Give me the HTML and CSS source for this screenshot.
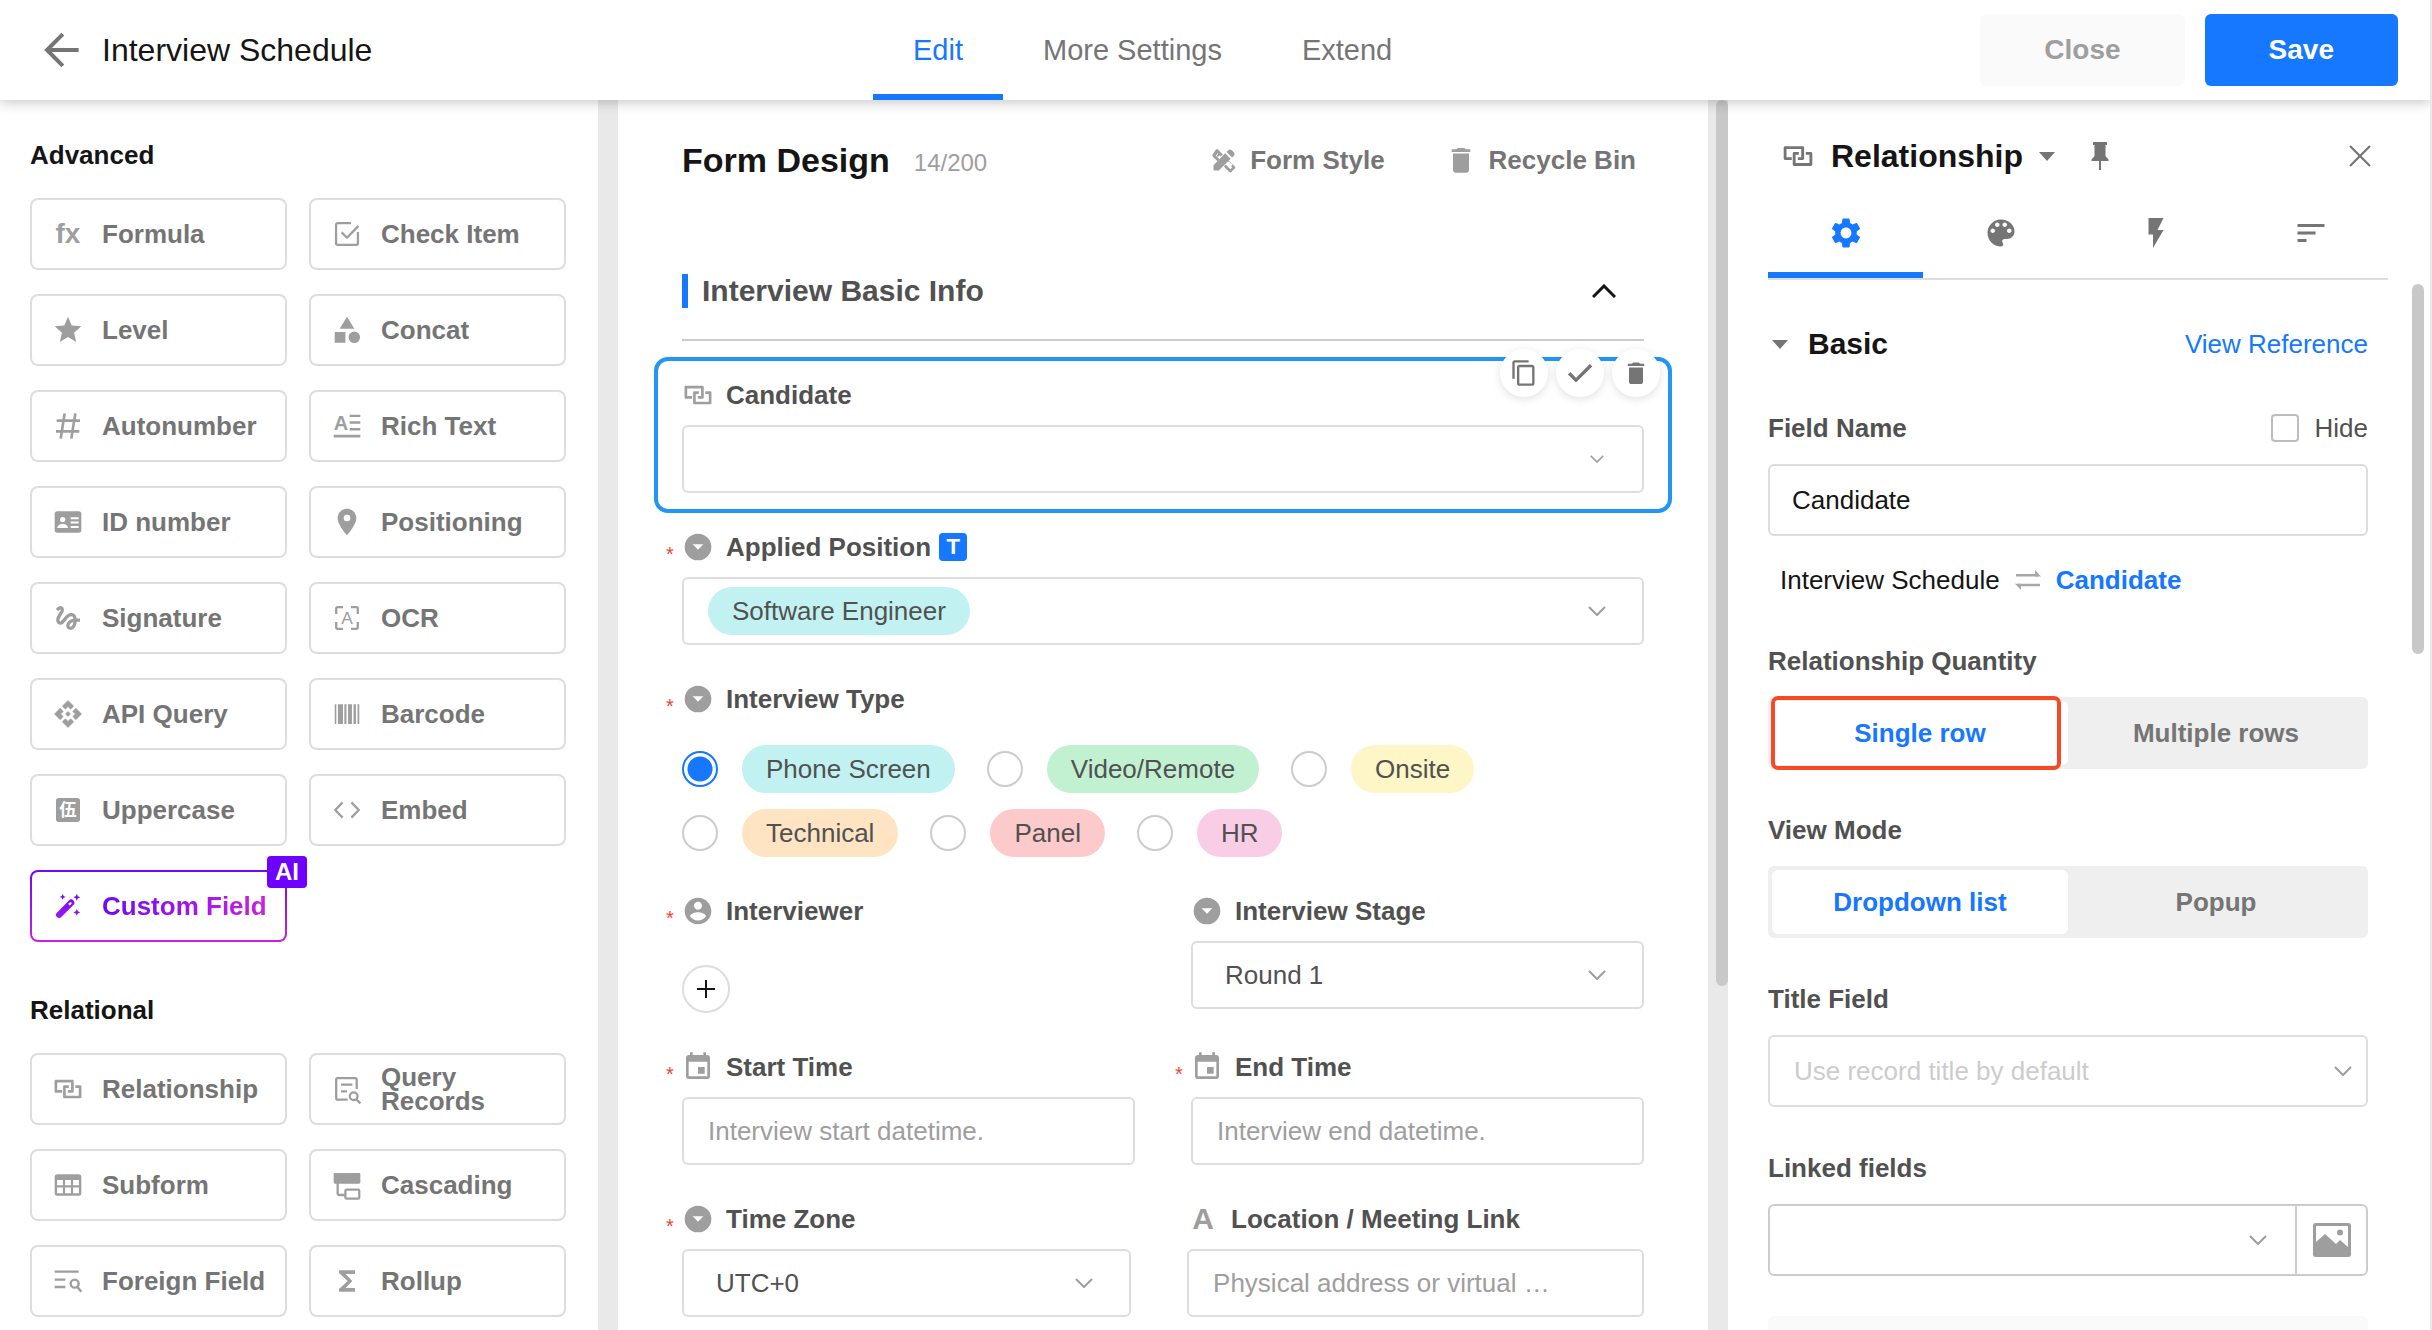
FILE: index.html
```html
<!DOCTYPE html>
<html lang="en">
<head>
  <meta charset="UTF-8">
  <meta name="viewport" content="width=device-width, initial-scale=1.0">
  <title>Interview Schedule</title>
  <link rel="stylesheet" href="styles.css">
</head>
<body>
  <!-- Icon sprite -->
  <svg class="sprite" aria-hidden="true">
    <defs>
      <linearGradient id="ai-gradient" x1="0" y1="0" x2="0" y2="1">
        <stop offset="0" stop-color="#6e09f9"/>
        <stop offset="1" stop-color="#a016f0"/>
      </linearGradient>
    </defs>
    <symbol id="i-relation" viewBox="0 0 24 24"><path fill="none" stroke="currentColor" stroke-width="2" stroke-linejoin="round" d="M7.6 13.8H2.9V6.1h12.4v7.7h-3.4M12.6 10.2H9.3V18h11.8v-7.8h-3.6"/></symbol>
    <symbol id="i-check-item" viewBox="0 0 24 24"><path fill="none" stroke="currentColor" stroke-width="1.7" stroke-linejoin="round" d="M15 3.8H5c-.7 0-1.2.5-1.2 1.2v14c0 .7.5 1.2 1.2 1.2h14c.7 0 1.2-.5 1.2-1.2v-8.500M8 10.800l4 4 8.600-8.900"/></symbol>
    <symbol id="i-star" viewBox="0 0 24 24"><path d="M12 17.270L18.180 21l-1.640-7.030L22 9.240l-7.190-.610L12 2 9.190 8.630 2 9.240l5.460 4.730L5.820 21z"/></symbol>
    <symbol id="i-shapes" viewBox="0 0 24 24"><path d="M12 2 6.500 11h11z"/><path d="M2.800 13.500h8v8h-8z"/><circle cx="17.500" cy="17.500" r="4.300"/></symbol>
    <symbol id="i-hash" viewBox="0 0 24 24"><path fill="none" stroke="currentColor" stroke-width="2" d="M9.500 2.500l-3 19M17.500 2.500l-3 19M3.500 8h17.500M3 16h17.500"/></symbol>
    <symbol id="i-id" viewBox="0 0 24 24"><path fill-rule="evenodd" d="M4 4h16a2 2 0 0 1 2 2v12a2 2 0 0 1-2 2H4a2 2 0 0 1-2-2V6a2 2 0 0 1 2-2zM8 8.200a2 2 0 1 0 0 4 2 2 0 0 0 0-4zM4 16.500h8c0-2-2-3-4-3s-4 1-4 3zM14 8.500v1.500h6V8.500zM14 11.700v1.500h6v-1.500zM14 15v1.500h6V15z"/></symbol>
    <symbol id="i-place" viewBox="0 0 24 24"><path fill-rule="evenodd" d="M12 2C8.130 2 5 5.130 5 9c0 5.250 7 13 7 13s7-7.750 7-13c0-3.870-3.130-7-7-7zm0 9.500a2.500 2.500 0 1 1 0-5 2.500 2.500 0 0 1 0 5z"/></symbol>
    <symbol id="i-gesture" viewBox="0 0 24 24"><path d="M4.590 6.890c.7-.71 1.400-1.350 1.710-1.220.5.2 0 1.030-.3 1.520-.25.42-2.860 3.890-2.860 6.310 0 1.280.48 2.340 1.340 2.980.75.56 1.740.73 2.640.46 1.070-.31 1.950-1.400 3.060-2.770 1.210-1.490 2.830-3.440 4.080-3.440 1.630 0 1.650 1.010 1.760 1.790-3.780.64-5.380 3.670-5.380 5.370 0 1.700 1.440 3.090 3.210 3.090 1.630 0 4.290-1.330 4.690-6.100H21v-2.500h-2.470c-.15-1.650-1.090-4.200-4.030-4.200-2.250 0-4.180 1.910-4.940 2.840-.58.73-2.060 2.480-2.290 2.720-.25.3-.68.84-1.110.84-.45 0-.72-.83-.36-1.920.35-1.090 1.400-2.860 1.850-3.520.78-1.140 1.300-1.920 1.300-3.280C8.950 3.690 7.310 3 6.440 3 5.120 3 3.970 4 3.720 4.250c-.36.36-.66.66-.88.93l1.750 1.710zm9.290 11.660c-.31 0-.74-.26-.74-.72 0-.6.73-2.200 2.870-2.760-.3 2.690-1.430 3.480-2.130 3.480z"/></symbol>
    <symbol id="i-api" viewBox="-1 -1 26 26"><path stroke="currentColor" stroke-width=".5" stroke-linejoin="round" d="M14 12l-2 2-2-2 2-2 2 2zm-2-6l2.120 2.120 2.500-2.500L12 1 7.380 5.620l2.500 2.500L12 6zm-6 6l2.120-2.120-2.500-2.500L1 12l4.620 4.620 2.500-2.500L6 12zm12 0l-2.120 2.120 2.500 2.500L23 12l-4.620-4.620-2.500 2.500L18 12zm-6 6l-2.120-2.120-2.500 2.500L12 23l4.620-4.620-2.500-2.500L12 18z"/></symbol>
    <symbol id="i-barcode" viewBox="0 0 24 24"><path d="M2.800 4.700h1.200v14.800H2.800zM5.200 4.700H9v14.800H5.200zM10 4.700h1.600v14.800H10zM12.800 4.700h2.900v14.800h-2.900zM16.900 4.700h1.800v14.800h-1.800zM19.900 4.700h1.300v14.800h-1.300z"/></symbol>
    <symbol id="i-code" viewBox="0 0 24 24"><path fill="none" stroke="currentColor" stroke-width="1.700" d="M8.700 6.300 3.200 12l5.500 5.700M15.300 6.300l5.500 5.700-5.500 5.700"/></symbol>
    <symbol id="i-wand" viewBox="0 0 24 24"><path fill="url(#ai-gradient)" fill-rule="evenodd" d="M12.700 7.800 3.700 17a2.300 2.300 0 0 0 3.300 3.300l9-9a2.300 2.300 0 0 0-3.300-3.500zM13 9.600l1.400-.6.300 1.300-1.400 1.400-1.200-1.200zM8 3l.7 1.500 1.500.7-1.500.7L8 7.400l-.7-1.500-1.500-.7 1.500-.7zM18.600 2.800l.8 1.800 1.800.8-1.800.8-.8 1.800-.8-1.800-1.800-.8 1.800-.8zM18.600 14.200l.8 1.800 1.800.8-1.800.8-.8 1.800-.8-1.800-1.800-.8 1.800-.8z"/></symbol>
    <symbol id="i-query" viewBox="0 0 24 24"><g fill="none" stroke="currentColor" stroke-width="1.700"><path d="M12.500 20H5c-.6 0-1.100-.5-1.100-1.100V4.900c0-.6.5-1.100 1.100-1.100h13.200c.6 0 1.100.5 1.100 1.100V12"/><path d="M7.500 8.800h8.500M7.500 13.700h4.500"/><circle cx="17" cy="17.500" r="2.900"/><path d="m19 19.800 3 3"/></g></symbol>
    <symbol id="i-table" viewBox="0 0 24 24"><path fill-rule="evenodd" d="M4 4h16a2 2 0 0 1 2 2v12a2 2 0 0 1-2 2H4a2 2 0 0 1-2-2V6a2 2 0 0 1 2-2zM3.800 8.200v4h4.400v-4zM9.800 8.200v4h4.400v-4zM15.800 8.200v4h4.400v-4zM3.800 13.800v4.400h4.400v-4.400zM9.800 13.800v4.400h4.400v-4.400zM15.800 13.800v4.400h4.400v-4.400z"/></symbol>
    <symbol id="i-cascade" viewBox="0 0 24 24"><rect x="2" y="3" width="20" height="8" rx="1"/><path fill="none" stroke="currentColor" stroke-width="1.700" d="M5 10v8.500c0 .5.400 1 1 1h5M11.700 15.500h8.600c.5 0 .9.400.9.900v4.900c0 .5-.4.900-.9.900h-8.600c-.5 0-.9-.4-.9-.9v-4.900c0-.5.4-.9.900-.9z"/></symbol>
    <symbol id="i-foreign" viewBox="0 0 24 24"><path fill="none" stroke="currentColor" stroke-width="1.800" d="M2 5h18M2 11h8M2 16.500h8"/><g fill="none" stroke="currentColor" stroke-width="1.800"><circle cx="17" cy="14" r="3"/><path d="m19 16.500 3 3.500"/></g></symbol>
    <symbol id="i-sum" viewBox="0 0 24 24"><path d="M18 4H6v2l6.500 6L6 18v2h12v-2.700H11l5-5.300-5-5.300h7z"/></symbol>
    <symbol id="i-back" viewBox="0 0 24 24"><path fill="none" stroke="currentColor" stroke-width="2.400" d="M22 12H3.500M12.500 2.500 3 12l9.500 9.500" /></symbol>
    <symbol id="i-tools" viewBox="0 0 24 24"><path fill-rule="evenodd" d="M6.800 3 11 7.200 9.300 8.900l-1-1-1.500 1.500-1.200-1.200 1.500-1.500-.4-.4-1.800 1.800 3.200 3.200-1.700 1.700L2.300 8.900a1.200 1.200 0 0 1 0-1.700L5.100 3a1.200 1.200 0 0 1 1.700 0z"/><path fill-rule="evenodd" d="M16.600 12.800 21.300 17.500a1.200 1.200 0 0 1 0 1.700l-3.100 3.100a1.200 1.200 0 0 1-1.700 0L11.800 17.600l1.700-1.700 3.900 4 1.700-1.700-1-1 1.200-1.200-3-3-.7.7-1.200-1.200z"/><path d="M3 16.500 13 6.300l4.700 4.700L7.500 21H3zM14.200 5.200l1.500-1.500a2.200 2.200 0 0 1 3.100 0l1.600 1.600a2.200 2.200 0 0 1 0 3.100l-1.500 1.500z"/></symbol>
    <symbol id="i-trash" viewBox="0 0 24 24"><path d="M6 19.500c0 1.100.9 2 2 2h8c1.100 0 2-.9 2-2V7.200H6v12.300zM19 4h-3.500l-1-1h-5l-1 1H5v2h14V4z"/></symbol>
    <symbol id="i-copy" viewBox="0 0 24 24"><path d="M16 1H4c-1.100 0-2 .9-2 2v14h2V3h12V1zm3 4H8c-1.100 0-2 .9-2 2v14c0 1.100.9 2 2 2h11c1.100 0 2-.9 2-2V7c0-1.100-.9-2-2-2zm0 16H8V7h11v14z"/></symbol>
    <symbol id="i-done" viewBox="0 0 24 24"><path fill="none" stroke="currentColor" stroke-width="2.500" d="m3.800 12.200 5.200 5.200L20.300 6.200"/></symbol>
    <symbol id="i-option" viewBox="0 0 24 24"><path fill-rule="evenodd" d="M12 2a10 10 0 1 0 0 20 10 10 0 0 0 0-20zM8 10h8l-4 4z"/></symbol>
    <symbol id="i-person" viewBox="0 0 24 24"><path d="M12 2C6.480 2 2 6.480 2 12s4.480 10 10 10 10-4.480 10-10S17.520 2 12 2zm0 3c1.660 0 3 1.340 3 3s-1.340 3-3 3-3-1.340-3-3 1.340-3 3-3zm0 14.200c-2.500 0-4.710-1.280-6-3.220.03-1.990 4-3.080 6-3.080 1.990 0 5.970 1.090 6 3.080-1.290 1.940-3.500 3.220-6 3.220z"/></symbol>
    <symbol id="i-event" viewBox="0 0 24 24"><path d="M17 12h-5v5h5v-5zM16 1v2H8V1H6v2H5c-1.110 0-1.990.9-1.990 2L3 19c0 1.100.89 2 2 2h14c1.100 0 2-.9 2-2V5c0-1.100-.9-2-2-2h-1V1h-2zm3 18H5V8h14v11z"/></symbol>
    <symbol id="i-chevron" viewBox="0 0 18 10"><path fill="none" stroke="currentColor" stroke-width="2" d="m1 1 8 8 8-8"/></symbol>
    <symbol id="i-collapse" viewBox="0 0 24 14"><path fill="none" stroke="currentColor" stroke-width="3" d="M1 13 12 2l11 11"/></symbol>
    <symbol id="i-caret" viewBox="0 0 16 9"><path d="M0 0h16L8 9z"/></symbol>
    <symbol id="i-pin" viewBox="0 0 18 28"><path d="M2 0h14v3h-1.500v11l3 3.500V19h-7.500v9H8v-9H.5v-1.500l3-3.500V3H2z"/></symbol>
    <symbol id="i-close" viewBox="0 0 22 22"><path fill="none" stroke="currentColor" stroke-width="2.200" d="m1 1 20 20M21 1 1 21"/></symbol>
    <symbol id="i-settings" viewBox="0 0 24 24"><path d="M19.140 12.940c.04-.3.06-.61.06-.94 0-.32-.02-.64-.07-.94l2.030-1.580c.18-.14.23-.41.12-.61l-1.920-3.320c-.12-.22-.37-.29-.59-.22l-2.390.96c-.5-.38-1.030-.7-1.620-.94l-.36-2.540c-.04-.24-.24-.41-.48-.41h-3.840c-.24 0-.43.17-.47.41l-.36 2.540c-.59.24-1.130.57-1.620.94l-2.390-.96c-.22-.08-.47 0-.59.22L2.740 8.870c-.12.21-.08.47.12.61l2.030 1.580c-.05.3-.09.63-.09.94s.02.64.07.94l-2.030 1.580c-.18.14-.23.41-.12.61l1.920 3.320c.12.22.37.29.59.22l2.390-.96c.5.38 1.030.7 1.620.94l.36 2.540c.05.24.24.41.48.41h3.840c.24 0 .44-.17.47-.41l.36-2.540c.59-.24 1.130-.56 1.620-.94l2.390.96c.22.08.47 0 .59-.22l1.920-3.320c.12-.22.07-.47-.12-.61l-2.010-1.580zM12 15.600c-1.980 0-3.600-1.620-3.600-3.600s1.620-3.600 3.600-3.600 3.600 1.620 3.600 3.600-1.620 3.600-3.600 3.600z"/></symbol>
    <symbol id="i-palette" viewBox="0 0 24 24"><path d="M12 3c-4.970 0-9 4.030-9 9s4.030 9 9 9c.83 0 1.500-.67 1.500-1.500 0-.39-.15-.74-.39-1.010-.23-.26-.38-.61-.38-.99 0-.83.67-1.500 1.500-1.500H16c2.760 0 5-2.240 5-5 0-4.420-4.030-8-9-8zm-5.500 9c-.83 0-1.500-.67-1.500-1.500S5.670 9 6.500 9 8 9.670 8 10.500 7.330 12 6.500 12zm3-4C8.670 8 8 7.330 8 6.500S8.670 5 9.500 5s1.500.67 1.500 1.500S10.330 8 9.500 8zm5 0c-.83 0-1.500-.67-1.500-1.500S13.670 5 14.500 5s1.500.67 1.500 1.500S15.330 8 14.500 8zm3 4c-.83 0-1.500-.67-1.500-1.500S16.670 9 17.500 9s1.500.67 1.500 1.500-.67 1.500-1.500 1.500z"/></symbol>
    <symbol id="i-bolt" viewBox="0 0 24 24"><path d="M7 2v11h3v9l7-12h-4l4-8z"/></symbol>
    <symbol id="i-sort" viewBox="0 0 24 24"><path d="M3 18h6v-2H3v2zM3 6v2h18V6H3zm0 7h12v-2H3v2z"/></symbol>
    <symbol id="i-swap" viewBox="0 0 26 20"><path fill="none" stroke="currentColor" stroke-width="2.400" d="M1 5.200h22M3 15h22"/><path d="m20 0 6 6.400h-6zM6 20l-6-6.200h6z"/></symbol>
    <symbol id="i-image" viewBox="0 0 38 34"><path fill-rule="evenodd" d="M3 0h32a3 3 0 0 1 3 3v28a3 3 0 0 1-3 3H3a3 3 0 0 1-3-3V3a3 3 0 0 1 3-3zM3 19l9-8 11 10 4-4 8 7V3H3zM27 6.500a3 3 0 1 1 0 6 3 3 0 0 1 0-6z"/></symbol>
  </svg>

  <header class="topbar">
    <div class="topbar-title">
      <button class="icon-btn" type="button" aria-label="Back"><svg class="icon icon-lg"><use href="#i-back"/></svg></button>
      <h1>Interview Schedule</h1>
    </div>
    <nav class="tabs">
      <a class="tab active" href="#edit">Edit</a>
      <a class="tab" href="#settings">More Settings</a>
      <a class="tab" href="#extend">Extend</a>
    </nav>
    <div class="topbar-actions">
      <button class="btn btn-plain" type="button">Close</button>
      <button class="btn btn-primary" type="button">Save</button>
    </div>
  </header>

  <div class="workspace">
    <aside class="sidebar">
      <h2>Advanced</h2>
      <div class="widgets">
        <button class="widget" type="button"><span class="glyph">fx</span>Formula</button>
        <button class="widget" type="button"><svg class="icon"><use href="#i-check-item"/></svg>Check Item</button>
        <button class="widget" type="button"><svg class="icon"><use href="#i-star"/></svg>Level</button>
        <button class="widget" type="button"><svg class="icon"><use href="#i-shapes"/></svg>Concat</button>
        <button class="widget" type="button"><svg class="icon"><use href="#i-hash"/></svg>Autonumber</button>
        <button class="widget" type="button"><svg class="icon" viewBox="0 0 24 24"><path d="M14 3.500h8v1.800h-8zM14 8.500h8v1.800h-8zM14 13.500h8v1.800h-8zM2 18.500h20v2.200H2z"/><text x="2" y="15" font-size="15" font-weight="bold">A</text></svg>Rich Text</button>
        <button class="widget" type="button"><svg class="icon"><use href="#i-id"/></svg>ID number</button>
        <button class="widget" type="button"><svg class="icon"><use href="#i-place"/></svg>Positioning</button>
        <button class="widget" type="button"><svg class="icon"><use href="#i-gesture"/></svg>Signature</button>
        <button class="widget" type="button"><svg class="icon" viewBox="0 0 24 24"><path fill="none" stroke="currentColor" stroke-width="1.700" d="M9 3.900H5c-.6 0-1.100.5-1.100 1.100v4M15 3.900h4c.6 0 1.100.5 1.100 1.100v4M9 20.100H5c-.6 0-1.100-.5-1.100-1.100v-4M15 20.100h4c.6 0 1.100-.5 1.100-1.100v-4"/><text x="12" y="16.500" font-size="13" text-anchor="middle" font-weight="normal">A</text></svg>OCR</button>
        <button class="widget" type="button"><svg class="icon"><use href="#i-api"/></svg>API Query</button>
        <button class="widget" type="button"><svg class="icon"><use href="#i-barcode"/></svg>Barcode</button>
        <button class="widget" type="button"><svg class="icon" viewBox="0 0 24 24"><rect x="3" y="3" width="18" height="18" rx="2"/><text class="cjk" x="12" y="16.600" font-size="13" text-anchor="middle">伍</text></svg>Uppercase</button>
        <button class="widget" type="button"><svg class="icon"><use href="#i-code"/></svg>Embed</button>
        <button class="widget widget-ai" type="button"><svg class="icon"><use href="#i-wand"/></svg><span class="ai-text">Custom Field</span><span class="ai-badge">AI</span></button>
      </div>

      <h2>Relational</h2>
      <div class="widgets">
        <button class="widget" type="button"><svg class="icon"><use href="#i-relation"/></svg>Relationship</button>
        <button class="widget" type="button"><svg class="icon"><use href="#i-query"/></svg>Query Records</button>
        <button class="widget" type="button"><svg class="icon"><use href="#i-table"/></svg>Subform</button>
        <button class="widget" type="button"><svg class="icon"><use href="#i-cascade"/></svg>Cascading</button>
        <button class="widget" type="button"><svg class="icon"><use href="#i-foreign"/></svg>Foreign Field</button>
        <button class="widget" type="button"><svg class="icon"><use href="#i-sum"/></svg>Rollup</button>
      </div>
    </aside>

    <div class="gutter"></div>

    <main class="canvas">
      <div class="canvas-head">
        <h2>Form Design</h2>
        <span class="count">14/200</span>
        <button class="link-btn" type="button"><svg class="icon-md"><use href="#i-tools"/></svg>Form Style</button>
        <button class="link-btn" type="button"><svg class="icon"><use href="#i-trash"/></svg>Recycle Bin</button>
      </div>

      <div class="section-head">
        <h3>Interview Basic Info</h3>
        <button class="icon-btn" type="button" aria-label="Collapse section"><svg class="icon-collapse"><use href="#i-collapse"/></svg></button>
      </div>

      <form>
        <div class="field selected">
          <div class="field-label"><svg class="icon"><use href="#i-relation"/></svg><label for="candidate">Candidate</label></div>
          <div class="box"><select id="candidate"><option></option></select><svg class="chevron chevron-sm"><use href="#i-chevron"/></svg></div>
          <div class="field-tools">
            <button type="button" aria-label="Copy"><svg class="icon-md"><use href="#i-copy"/></svg></button>
            <button type="button" aria-label="Done"><svg class="icon"><use href="#i-done"/></svg></button>
            <button type="button" aria-label="Delete"><svg class="icon-md"><use href="#i-trash"/></svg></button>
          </div>
        </div>

        <div class="field">
          <div class="field-label"><span class="required">*</span><svg class="icon"><use href="#i-option"/></svg><label for="position">Applied Position</label><span class="title-badge">T</span></div>
          <div class="box box-tag"><select id="position" class="pill cyan"><option>Software Engineer</option></select><svg class="chevron"><use href="#i-chevron"/></svg></div>
        </div>

        <div class="field" role="radiogroup" aria-labelledby="type-label">
          <div class="field-label"><span class="required">*</span><svg class="icon"><use href="#i-option"/></svg><span id="type-label">Interview Type</span></div>
          <div class="choices">
            <label class="choice"><input type="radio" name="type" checked><span class="pill cyan">Phone Screen</span></label>
            <label class="choice"><input type="radio" name="type"><span class="pill green">Video/Remote</span></label>
            <label class="choice"><input type="radio" name="type"><span class="pill yellow">Onsite</span></label>
          </div>
          <div class="choices">
            <label class="choice"><input type="radio" name="type"><span class="pill orange">Technical</span></label>
            <label class="choice"><input type="radio" name="type"><span class="pill red">Panel</span></label>
            <label class="choice"><input type="radio" name="type"><span class="pill pink">HR</span></label>
          </div>
        </div>

        <div class="field-row">
          <div class="field">
            <div class="field-label"><span class="required">*</span><svg class="icon"><use href="#i-person"/></svg><label for="add-interviewer">Interviewer</label></div>
            <button id="add-interviewer" class="add-btn" type="button" aria-label="Add interviewer"><svg class="plus" viewBox="0 0 18 18"><path d="M8 0h2v8h8v2h-8v8H8v-8H0V8h8z"/></svg></button>
          </div>
          <div class="field">
            <div class="field-label"><svg class="icon"><use href="#i-option"/></svg><label for="stage">Interview Stage</label></div>
            <div class="box"><select id="stage"><option>Round 1</option></select><svg class="chevron"><use href="#i-chevron"/></svg></div>
          </div>
        </div>

        <div class="field-row">
          <div class="field">
            <div class="field-label"><span class="required">*</span><svg class="icon"><use href="#i-event"/></svg><label for="start">Start Time</label></div>
            <input id="start" class="box" type="text" placeholder="Interview start datetime.">
          </div>
          <div class="field">
            <div class="field-label"><span class="required">*</span><svg class="icon"><use href="#i-event"/></svg><label for="end">End Time</label></div>
            <input id="end" class="box" type="text" placeholder="Interview end datetime.">
          </div>
        </div>

        <div class="field-row field-row-uneven">
          <div class="field">
            <div class="field-label"><span class="required">*</span><svg class="icon"><use href="#i-option"/></svg><label for="zone">Time Zone</label></div>
            <div class="box"><select id="zone"><option>UTC+0</option></select><svg class="chevron"><use href="#i-chevron"/></svg></div>
          </div>
          <div class="field">
            <div class="field-label"><span class="glyph">A</span><label for="location">Location / Meeting Link</label></div>
            <input id="location" class="box" type="text" placeholder="Physical address or virtual …">
          </div>
        </div>
      </form>
    </main>

    <div class="gutter gutter-scroll"><div class="thumb"></div></div>

    <aside class="panel">
      <div class="panel-head">
        <svg class="icon"><use href="#i-relation"/></svg>
        <h2>Relationship</h2>
        <svg class="caret"><use href="#i-caret"/></svg>
        <button class="icon-btn pin-btn" type="button" aria-label="Pin"><svg class="icon-pin"><use href="#i-pin"/></svg></button>
        <button class="icon-btn close-btn" type="button" aria-label="Close panel"><svg class="icon-close"><use href="#i-close"/></svg></button>
      </div>
      <div class="panel-tabs">
        <button class="active" type="button" aria-label="Settings"><svg><use href="#i-settings"/></svg></button>
        <button type="button" aria-label="Style"><svg><use href="#i-palette"/></svg></button>
        <button type="button" aria-label="Events"><svg><use href="#i-bolt"/></svg></button>
        <button type="button" aria-label="Description"><svg><use href="#i-sort"/></svg></button>
      </div>

      <div class="panel-scroll">
        <div class="panel-body">
          <div class="group-head">
            <svg class="caret"><use href="#i-caret"/></svg>
            <h3>Basic</h3>
            <a href="#reference">View Reference</a>
          </div>

          <div class="prop">
            <div class="prop-label">
              <label for="field-name">Field Name</label>
              <label class="hide-toggle"><input type="checkbox">Hide</label>
            </div>
            <input id="field-name" class="prop-box" type="text" value="Candidate">
          </div>

          <div class="relation">Interview Schedule<svg class="icon-swap"><use href="#i-swap"/></svg><a href="#candidate">Candidate</a></div>

          <div class="prop">
            <div class="prop-label">Relationship Quantity</div>
            <div class="segmented">
              <button class="active" type="button">Single row</button>
              <button type="button">Multiple rows</button>
              <div class="highlight"></div>
            </div>
          </div>

          <div class="prop">
            <div class="prop-label">View Mode</div>
            <div class="segmented">
              <button class="active" type="button">Dropdown list</button>
              <button type="button">Popup</button>
            </div>
          </div>

          <div class="prop">
            <div class="prop-label"><label for="title-field">Title Field</label></div>
            <div class="prop-box prop-select"><select id="title-field"><option>Use record title by default</option></select><svg class="chevron"><use href="#i-chevron"/></svg></div>
          </div>

          <div class="prop">
            <div class="prop-label"><label for="linked">Linked fields</label></div>
            <div class="prop-box linked">
              <select id="linked"><option></option></select>
              <svg class="chevron"><use href="#i-chevron"/></svg>
              <button type="button" aria-label="Cover image"><svg class="icon-image"><use href="#i-image"/></svg></button>
            </div>
            <div class="linked-list"></div>
          </div>
        </div>
        <div class="thumb"></div>
      </div>
    </aside>
  </div>
</body>
</html>
```

FILE: styles.css
```css
:root {
  --primary: #1677ff;
  --select: #2196f3;
  --text: #151515;
  --text-mid: #515151;
  --text-soft: #757575;
  --muted: #9e9e9e;
  --border: #dddddd;
  --gutter: #e9e9e9;
  --thumb: #c8c8c8;
}

* {
  box-sizing: border-box;
}

body {
  margin: 0;
  height: 100vh;
  display: flex;
  flex-direction: column;
  overflow: hidden;
  border-right: 2px solid var(--gutter);
  background: #fff;
  color: var(--text);
  font-family: "Liberation Sans", Arial, "Noto Sans CJK SC", sans-serif;
  font-size: 26px;
  line-height: 36px;
}

h1, h2, h3 {
  margin: 0;
}

button, input, select {
  font: inherit;
  color: inherit;
}

button {
  border: none;
  background: none;
  padding: 0;
  cursor: pointer;
}

select {
  appearance: none;
  border: none;
  background: none;
  outline: none;
}

a {
  color: var(--primary);
  text-decoration: none;
}

svg {
  display: block;
  flex: none;
  fill: currentColor;
}

.sprite {
  position: absolute;
  width: 0;
  height: 0;
}

.icon {
  width: 32px;
  height: 32px;
}

.icon-lg {
  width: 40px;
  height: 40px;
}

.icon-md {
  width: 28px;
  height: 28px;
}

.chevron {
  width: 18px;
  height: 10px;
  color: var(--muted);
}

.chevron-sm {
  width: 14px;
  height: 8px;
  margin-right: 2px;
}

.caret {
  width: 16px;
  height: 9px;
  color: var(--text-soft);
}

.glyph {
  width: 32px;
  text-align: center;
  font-weight: bold;
  font-size: 28px;
  color: var(--muted);
}

.cjk {
  fill: #fff;
  font-family: "Noto Sans CJK SC", sans-serif;
}

.thumb {
  width: 12px;
  border-radius: 6px;
  background: var(--thumb);
}

/* Top bar */
.topbar {
  position: relative;
  z-index: 2;
  flex: none;
  display: flex;
  height: 100px;
  background: #fff;
  box-shadow: 0 2px 12px rgba(0, 0, 0, 0.24);
}

.topbar-title {
  display: flex;
  align-items: center;
  gap: 20px;
  width: 873px;
  padding-left: 42px;
  color: var(--text-soft);
}

.topbar-title h1 {
  font-size: 32px;
  font-weight: normal;
  color: var(--text);
}

.tabs {
  display: flex;
  flex: 1;
}

.tab {
  display: flex;
  align-items: center;
  padding: 6px 40px 0;
  border-bottom: 6px solid transparent;
  font-size: 29px;
  font-weight: 500;
  color: var(--text-soft);
}

.tab.active {
  color: var(--primary);
  border-color: var(--primary);
}

.topbar-actions {
  display: flex;
  align-items: center;
  gap: 20px;
  padding-right: 32px;
}

.btn {
  height: 72px;
  padding: 0 64px;
  border-radius: 6px;
  font-size: 28px;
  font-weight: bold;
}

.btn-plain {
  background: #fafafa;
  color: var(--muted);
}

.btn-primary {
  background: var(--primary);
  color: #fff;
}

/* Layout */
.workspace {
  flex: 1;
  min-height: 0;
  display: flex;
}

.gutter {
  flex: none;
  width: 20px;
  background: var(--gutter);
}

.gutter-scroll {
  display: flex;
  justify-content: flex-end;
}

.gutter-scroll .thumb {
  height: 72%;
}

/* Widget list */
.sidebar {
  flex: none;
  width: 598px;
  padding: 37px 32px 0 30px;
  overflow: hidden;
}

.sidebar h2 {
  margin-bottom: 25px;
  font-size: 26px;
}

.widgets {
  display: grid;
  grid-template-columns: 1fr 1fr;
  gap: 24px 22px;
  margin-bottom: 50px;
}

.widget {
  position: relative;
  display: flex;
  align-items: center;
  gap: 18px;
  height: 72px;
  padding: 0 16px 0 20px;
  border: 2px solid var(--border);
  border-radius: 8px;
  font-weight: bold;
  line-height: 24px;
  text-align: left;
  color: var(--text-soft);
}

.widget .icon {
  color: var(--muted);
}

.widget-ai {
  border-color: transparent;
  background:
    linear-gradient(#fff, #fff) padding-box,
    linear-gradient(#6e09f9, #c822dd) border-box;
}

.ai-text {
  line-height: 36px;
  white-space: nowrap;
  background: linear-gradient(90deg, #6e09f9, #c822dd);
  background-clip: text;
  color: transparent;
}

.ai-badge {
  position: absolute;
  top: -16px;
  right: -22px;
  width: 40px;
  height: 32px;
  border-radius: 4px;
  background: #6e00ff;
  color: #fff;
  font-size: 24px;
  line-height: 32px;
  text-align: center;
}

/* Form canvas */
.canvas {
  flex: 1;
  min-width: 0;
  padding: 40px 64px 0;
  overflow: hidden;
}

.canvas-head {
  display: flex;
  align-items: center;
  height: 40px;
}

.canvas-head h2 {
  font-size: 34px;
}

.count {
  flex: 1;
  padding: 6px 0 0 24px;
  font-size: 24px;
  color: var(--muted);
}

.link-btn {
  display: flex;
  align-items: center;
  gap: 12px;
  padding-right: 8px;
  font-weight: bold;
  color: var(--text-soft);
}

.link-btn + .link-btn {
  margin-left: 52px;
}

.link-btn svg {
  color: var(--muted);
}

.section-head {
  display: flex;
  align-items: center;
  justify-content: space-between;
  height: 98px;
  margin-top: 63px;
  padding-right: 28px;
  border-bottom: 2px solid #ccc;
}

.section-head h3 {
  padding-left: 14px;
  border-left: 6px solid var(--primary);
  font-size: 30px;
  line-height: 34px;
  color: var(--text-mid);
}

.icon-collapse {
  width: 24px;
  height: 14px;
}

.field {
  position: relative;
  padding-top: 36px;
}

.field.selected {
  margin: 16px -28px -20px;
  padding: 16px 24px;
  border: 4px solid var(--select);
  border-radius: 14px;
}

.field-label {
  display: flex;
  align-items: center;
  gap: 12px;
  height: 36px;
  margin-bottom: 12px;
  font-weight: bold;
  color: var(--text-mid);
}

.field-label .icon {
  color: var(--muted);
}

.required {
  width: 12px;
  margin: 14px 0 0 -24px;
  padding-left: 8px;
  font-size: 20px;
  font-weight: normal;
  color: #f44336;
}

.title-badge {
  width: 28px;
  height: 28px;
  margin-left: -4px;
  border-radius: 4px;
  background: var(--primary);
  color: #fff;
  font-size: 22px;
  line-height: 28px;
  text-align: center;
}

.box {
  display: flex;
  align-items: center;
  width: 100%;
  height: 68px;
  padding: 0 36px 0 32px;
  border: 2px solid var(--border);
  border-radius: 6px;
  background: #fff;
  color: var(--text-mid);
}

.box select {
  flex: 1;
  padding: 0;
}

input.box {
  padding: 0 24px;
  outline: none;
}

input.box::placeholder {
  color: var(--muted);
}

.box-tag {
  justify-content: space-between;
  padding-left: 24px;
}

.pill {
  height: 48px;
  padding: 0 24px;
  border-radius: 24px;
  line-height: 48px;
  color: var(--text-mid);
}

.box-tag .pill {
  flex: none;
  padding: 0 24px;
}

.cyan { background: #c2f1f2; }
.green { background: #c2f1d2; }
.yellow { background: #fef6c6; }
.orange { background: #fee4c2; }
.red { background: #fccaca; }
.pink { background: #f9cde6; }

.field-tools {
  position: absolute;
  top: -12px;
  right: 8px;
  display: flex;
  gap: 8px;
}

.field-tools button {
  display: flex;
  align-items: center;
  justify-content: center;
  width: 48px;
  height: 48px;
  border-radius: 50%;
  background: #fff;
  box-shadow: 0 2px 10px rgba(0, 0, 0, 0.12);
  color: var(--text-soft);
}

.choices {
  display: flex;
  flex-wrap: wrap;
  gap: 16px 32px;
  padding-top: 16px;
}

.choice {
  display: flex;
  align-items: center;
  gap: 24px;
}

.choice input {
  appearance: none;
  width: 36px;
  height: 36px;
  margin: 0;
  border: 2px solid #ccc;
  border-radius: 50%;
}

.choice input:checked {
  border-color: var(--primary);
  background: radial-gradient(var(--primary) 12px, #fff 13px);
}

.field-row {
  display: grid;
  grid-template-columns: 1fr 1fr;
  gap: 56px;
}

.field-row-uneven {
  grid-template-columns: 57fr 58fr;
}

.add-btn {
  display: flex;
  align-items: center;
  justify-content: center;
  width: 48px;
  height: 48px;
  margin-top: 36px;
  border: 2px solid var(--border);
  border-radius: 50%;
}

.plus {
  width: 18px;
  height: 18px;
}

.field-label .glyph {
  font-size: 30px;
}

/* Property panel */
.panel {
  flex: none;
  width: 702px;
  display: flex;
  flex-direction: column;
  padding-left: 40px;
}

.panel-head {
  display: flex;
  align-items: center;
  height: 40px;
  margin-top: 36px;
  padding: 0 59px 0 13px;
  color: var(--text-soft);
}

.panel-head .icon {
  width: 34px;
  height: 34px;
}

.panel-head h2 {
  padding: 0 16px;
  font-size: 32px;
  color: var(--text);
}

.pin-btn {
  margin-left: 36px;
}

.icon-pin {
  width: 18px;
  height: 28px;
}

.close-btn {
  margin-left: auto;
}

.icon-close {
  width: 22px;
  height: 22px;
}

.panel-tabs {
  flex: none;
  display: grid;
  grid-template-columns: repeat(4, 1fr);
  margin: 10px 42px 0 0;
  border-bottom: 2px solid var(--border);
}

.panel-tabs button {
  display: flex;
  justify-content: center;
  padding: 29px 0 21px;
  border-bottom: 6px solid transparent;
  color: var(--text-soft);
}

.panel-tabs button.active {
  border-color: var(--primary);
  color: var(--primary);
}

.panel-tabs svg {
  width: 36px;
  height: 36px;
}

.panel-scroll {
  flex: 1;
  min-height: 0;
  display: flex;
  justify-content: space-between;
  padding: 4px 6px 0 0;
  overflow: hidden;
}

.panel-scroll > .thumb {
  height: 370px;
}

.panel-body {
  flex: 1;
  margin-right: 44px;
  padding-top: 42px;
}

.group-head {
  display: flex;
  align-items: center;
  padding-left: 4px;
  margin-bottom: 48px;
}

.group-head h3 {
  padding-left: 20px;
  font-size: 30px;
}

.group-head a {
  margin-left: auto;
}

.prop {
  margin-bottom: 43px;
}

.prop-label {
  display: flex;
  justify-content: space-between;
  height: 36px;
  margin-bottom: 18px;
  font-weight: bold;
  color: var(--text-mid);
}

.hide-toggle {
  display: flex;
  align-items: center;
  gap: 16px;
  font-weight: normal;
}

.hide-toggle input {
  appearance: none;
  width: 28px;
  height: 28px;
  margin: 0;
  border: 2px solid #bdbdbd;
  border-radius: 4px;
}

.prop-box {
  width: 100%;
  height: 72px;
  padding: 0 22px;
  border: 2px solid var(--border);
  border-radius: 6px;
  background: #fff;
  outline: none;
}

.relation {
  display: flex;
  align-items: center;
  margin: -17px 0 45px;
  padding-left: 12px;
}

.relation a {
  font-weight: bold;
}

.icon-swap {
  width: 26px;
  height: 20px;
  margin: 0 15px;
  color: #a8a8a8;
}

.segmented {
  position: relative;
  display: grid;
  grid-template-columns: 1fr 1fr;
  height: 72px;
  padding: 4px;
  border-radius: 6px;
  background: #efefef;
}

.segmented button {
  border-radius: 6px;
  font-weight: bold;
  color: var(--text-soft);
}

.segmented button.active {
  background: #fff;
  color: var(--primary);
}

.highlight {
  position: absolute;
  top: -1px;
  left: 3px;
  width: calc(50% - 10px);
  height: 74px;
  border: 4px solid #f54a24;
  border-radius: 7px;
}

.prop-select {
  display: flex;
  align-items: center;
  padding: 0 14px 0 24px;
}

.prop-select select {
  flex: 1;
  padding: 0;
  color: #ccc;
}

.linked {
  display: flex;
  align-items: center;
  padding: 0;
  border-color: #ccc;
}

.linked select {
  flex: 1;
}

.linked button {
  display: flex;
  align-items: center;
  justify-content: center;
  align-self: stretch;
  width: 71px;
  margin-left: 28px;
  border-left: 2px solid #ccc;
  color: var(--muted);
}

.icon-image {
  width: 38px;
  height: 34px;
}

.linked-list {
  height: 100px;
  margin-top: 40px;
  border-radius: 6px;
  background: #fafafa;
}
```
